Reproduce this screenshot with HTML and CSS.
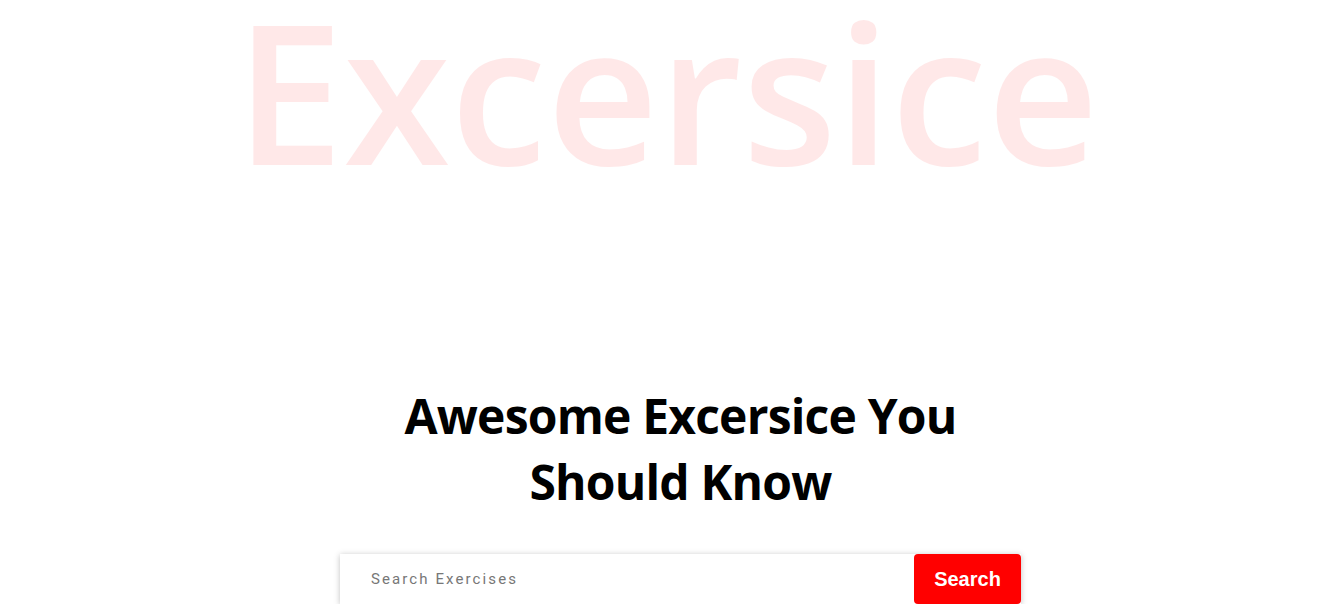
FILE: index.html
```html
<!DOCTYPE html>
<html>
<head>
<meta charset="utf-8">
<link rel="stylesheet" href="styles.css">
</head>
<body>
<main class="hero">
  <div class="bg-word">Excersice</div>
  <section class="search-section">
    <h1 class="title">Awesome Excersice You<br>Should Know</h1>
    <div class="search-box">
      <input class="search-input" type="text" placeholder="Search Exercises">
      <button class="search-btn">Search</button>
    </div>
  </section>
</main>
</body>
</html>
```
FILE: styles.css
```css
html, body {
  margin: 0;
  padding: 0;
  background: #fff;
}
body {
  font-family: "Open Sans", "Noto Sans", sans-serif;
  overflow: hidden;
}
.hero {
  display: flex;
  flex-direction: column;
  align-items: center;
}
.bg-word {
  font-size: 194px;
  font-weight: 600;
  line-height: 180px;
  color: #ff2625;
  opacity: 0.1;
}
.search-section {
  display: flex;
  flex-direction: column;
  align-items: center;
  margin-top: 203px;
  padding-left: 27px;
}
.title {
  margin: 0;
  font-size: 48px;
  font-weight: 700;
  letter-spacing: -0.8px;
  line-height: 66px;
  text-align: center;
  color: #000;
}
.search-box {
  margin-top: 39px;
  width: 681px;
  height: 50px;
  display: flex;
  box-shadow: 0 1px 6px rgba(0,0,0,0.25);
  background: #fff;
}
.search-input {
  flex: 1;
  border: none;
  outline: none;
  padding: 0 0 0 31px;
  font-family: Roboto, "Liberation Sans", sans-serif;
  font-size: 15px;
  letter-spacing: 2.1px;
  color: #333;
  background: transparent;
}
.search-input::placeholder {
  color: #777;
  opacity: 1;
}
.search-btn {
  width: 107px;
  border: none;
  border-radius: 4px;
  background: #ff0000;
  color: #fff;
  font-family: "Liberation Sans", Arial, sans-serif;
  font-weight: 700;
  font-size: 20px;
  cursor: pointer;
}
```
